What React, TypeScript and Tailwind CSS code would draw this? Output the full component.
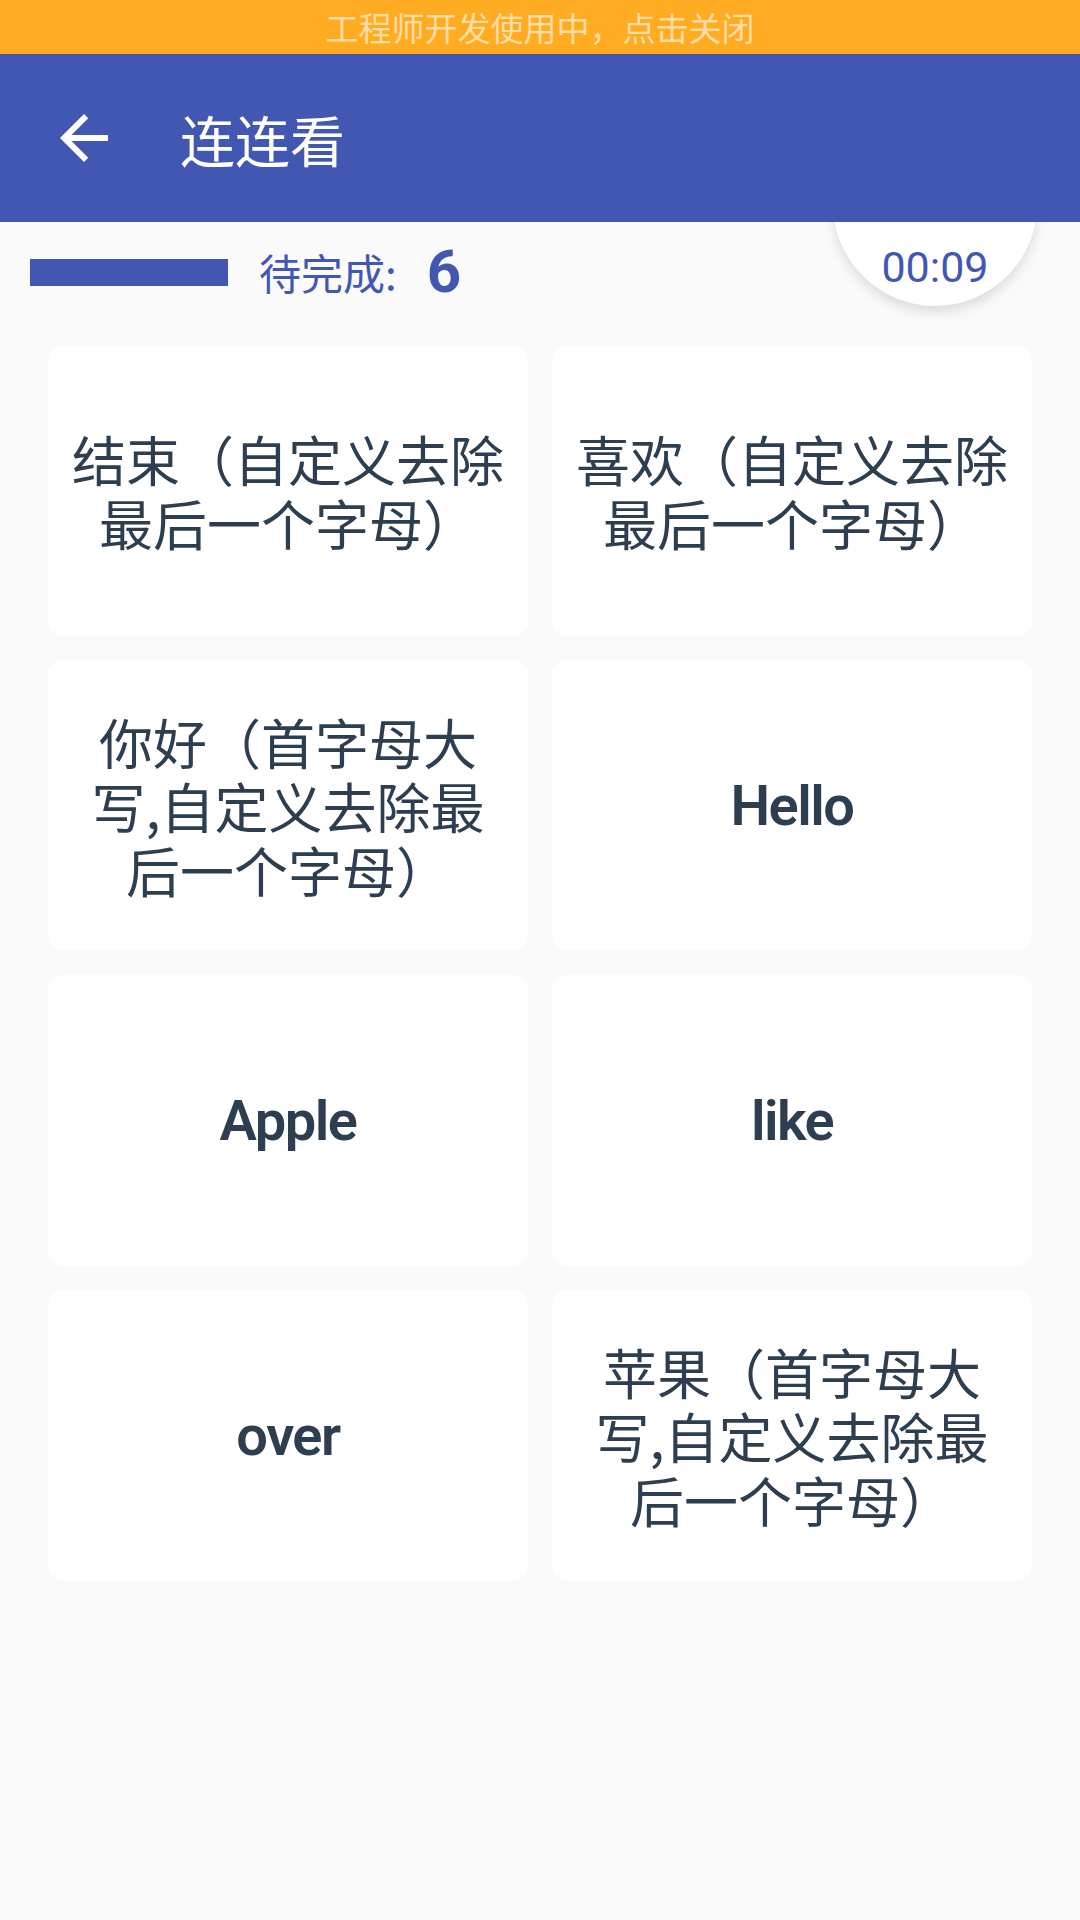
import React from "react";

const cards: { text: string; latin?: boolean }[] = [
  { text: "结束（自定义去除最后一个字母）" },
  { text: "喜欢（自定义去除最后一个字母）" },
  { text: "你好（首字母大写,自定义去除最后一个字母）" },
  { text: "Hello", latin: true },
  { text: "Apple", latin: true },
  { text: "like", latin: true },
  { text: "over", latin: true },
  { text: "苹果（首字母大写,自定义去除最后一个字母）" },
];

const cjk = { fontFamily: '"Noto Sans CJK SC", "Noto Sans", sans-serif' };
const roboto = { fontFamily: 'Roboto, "Noto Sans CJK SC", sans-serif' };

export default function App() {
  return (
    <div className="min-h-[1920px] w-[1080px] bg-[#fafafa] relative overflow-hidden" style={cjk}>
      <div className="relative z-20 h-[54px] bg-[#ffac22] flex items-center justify-center">
        <span className="text-[33px] leading-none text-white/60">工程师开发使用中，点击关闭</span>
      </div>
      <div className="relative z-20 h-[168px] bg-[#4257b2] flex items-center">
        <div className="w-[72px] h-[72px] ml-[48px] flex items-center justify-center">
          <svg width="72" height="72" viewBox="0 0 24 24" fill="white">
            <path d="M20 11H7.83l5.59-5.59L12 4l-8 8 8 8 1.41-1.41L7.83 13H20v-2z" />
          </svg>
        </div>
        <span className="ml-[60px] text-[55px] leading-none text-white">连连看</span>
      </div>
      <div className="relative">
        <div className="absolute left-[833px] top-[-120px] w-[204px] h-[204px] rounded-full bg-white shadow-[0_6px_12px_rgba(0,0,0,0.12)] z-10 flex items-end justify-center pb-[17px]">
          <span className="text-[43px] leading-none text-[#4257b2]" style={roboto}>00:09</span>
        </div>
        <div className="h-[100px] flex items-center pl-[30px]">
          <div className="w-[198px] h-[27px] bg-[#4257b2]" />
          <span className="ml-[31px] text-[42px] leading-none text-[#4257b2]">待完成:</span>
          <span className="ml-[30px] text-[60px] leading-none font-bold text-[#4257b2]" style={roboto}>6</span>
        </div>
        <div className="mt-[23px] px-[48px] grid grid-cols-2 gap-[24px]">
          {cards.map((c, i) => (
            <div key={i} className="h-[291px] bg-white rounded-[16px] flex items-center justify-center px-[20px] text-center text-[#2c3e50]">
              {c.latin ? (
                <span className="text-[56px] leading-none font-semibold tracking-[-1.5px]" style={roboto}>{c.text}</span>
              ) : (
                <span className="text-[54px] leading-[64px]">{c.text}</span>
              )}
            </div>
          ))}
        </div>
      </div>
    </div>
  );
}
